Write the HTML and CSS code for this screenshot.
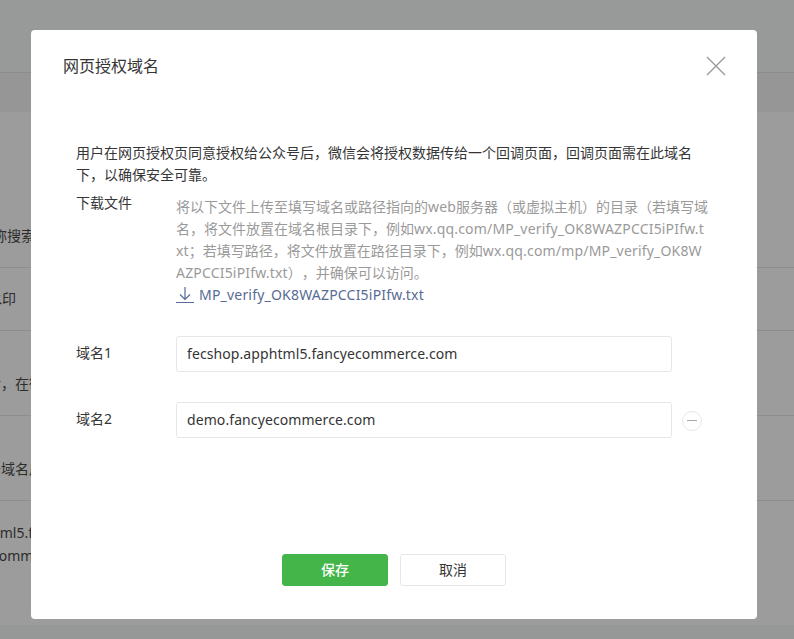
FILE: index.html
```html
<!DOCTYPE html>
<html lang="zh-CN">
<head>
<meta charset="utf-8">
<title>网页授权域名</title>
<link rel="stylesheet" href="styles.css">
</head>
<body>
<div class="page">
  <div class="top"></div>
  <div class="band"></div>
  <div class="rows">
    <div class="row row-a"><span class="bg-text shift-a">名称搜索</span></div>
    <div class="row row-b"><span class="bg-text shift-b">水印</span></div>
    <div class="row row-c"><span class="bg-text shift-c">后，在微</span></div>
    <div class="row row-d"><span class="bg-text shift-d">务域名后</span></div>
    <div class="row row-e"><span class="bg-text shift-e">html5.fancy<span class="line-two">commerce</span></span></div>
  </div>
  <div class="bottom"></div>
</div>

<div class="dialog">
  <div class="head">
    <h2 class="title">网页授权域名</h2>
    <svg class="close" width="20" height="20" viewBox="0 0 20 20"><path d="M1 1L19 19M19 1L1 19" fill="none" stroke="#9a9a9a" stroke-width="1.4"/></svg>
  </div>
  <div class="body">
    <p class="intro">用户在网页授权页同意授权给公众号后，微信会将授权数据传给一个回调页面，回调页面需在此域名下，以确保安全可靠。</p>
    <div class="field field-file">
      <div class="label">下载文件</div>
      <div class="content">
        <p class="desc">将以下文件上传至填写域名或路径指向的<span class="la">web</span>服务器（或虚拟主机）的目录（若填写域名，将文件放置在域名根目录下，例如<span class="la">wx.qq.com/MP_verify_OK8WAZPCCI5iPIfw.txt</span>；若填写路径，将文件放置在路径目录下，例如<span class="la">wx.qq.com/mp/MP_verify_OK8WAZPCCI5iPIfw.txt</span>），并确保可以访问。</p>
        <a class="file" href="#">
          <svg class="dl" width="18" height="18" viewBox="0 0 18 18"><path d="M9 1V13.5M4 8.5L9 13.5L14 8.5M0 16.5H18" fill="none" stroke="#576b95" stroke-width="1.2"/></svg>
          <span class="la-file">MP_verify_OK8WAZPCCI5iPIfw.txt</span>
        </a>
      </div>
    </div>
    <div class="field field-input">
      <div class="label">域名1</div>
      <div class="box">fecshop.apphtml5.fancyecommerce.com</div>
    </div>
    <div class="field field-input">
      <div class="label">域名2</div>
      <div class="box">demo.fancyecommerce.com</div>
      <span class="minus"></span>
    </div>
  </div>
  <div class="actions">
    <button class="btn primary" type="button">保存</button>
    <button class="btn" type="button">取消</button>
  </div>
</div>
</body>
</html>
```
FILE: styles.css
```css
* { box-sizing: border-box; }
html, body { margin: 0; padding: 0; height: 100%; overflow: hidden; }
body {
  font-family: "Noto Sans", "Noto Sans CJK SC", sans-serif;
  font-size: 14px;
  color: #353535;
  background: #979998;
  text-spacing-trim: space-all;
}
.page { display: flex; flex-direction: column; height: 639px; }
.top { height: 73px; background: #989a99; border-bottom: 1px solid #8c8c8c; }
.band { height: 39px; background: #959695; }
.rows { height: 513px; background: #9c9c9c; }
.row { border-bottom: 1px solid #8d8d8d; display: flex; align-items: flex-end; overflow: hidden; line-height: 23px; color: #2c2c2c; }
.row-a { height: 156px; padding-bottom: 20px; }
.row-b { height: 63px; padding-bottom: 20px; }
.row-c { height: 85px; padding-bottom: 20px; }
.row-d { height: 85px; padding-bottom: 20px; }
.row-e { height: 124px; border-bottom: 0; padding-bottom: 58px; }
.bg-text { white-space: nowrap; }
.shift-a { margin-left: -21px; }
.shift-b { margin-left: -12px; }
.shift-c { margin-left: -13px; }
.shift-d { margin-left: -13px; }
.shift-e { margin-left: -14px; }
.line-two { display: block; padding-left: 6px; }
.bottom { flex: 1; background: #969897; }

.dialog {
  position: absolute;
  left: 31px;
  top: 30px;
  width: 726px;
  height: 589px;
  background: #fff;
  border-radius: 4px;
  display: flex;
  flex-direction: column;
}
.head { display: flex; justify-content: space-between; align-items: center; padding: 12px 31px 0 32px; height: 60px; }
.title { margin: 0; font-size: 16px; font-weight: 400; line-height: 24px; }
.close { display: block; }
.body { flex: 1; padding: 52px 45px 0; }
.intro { margin: 0; line-height: 22px; width: 620px; }
.field { display: flex; }
.field-file { margin-top: 6px; }
.label { width: 100px; flex: none; line-height: 22px; }
.content { width: 534px; color: #9a9a9a; padding-top: 4px; }
.desc { margin: 0; line-height: 22px; word-break: break-all; }
.la { letter-spacing: .18px; }
.file { display: flex; align-items: center; gap: 5px; line-height: 22px; color: #576b95; text-decoration: none; }
.la-file { letter-spacing: .2px; }
.dl { display: block; }
.field-input { align-items: center; height: 36px; margin-bottom: 30px; }
.field-input .label { margin-bottom: 2px; }
.field-file + .field-input { margin-top: 30px; }
.box { width: 496px; height: 36px; border: 1px solid #e7e7eb; border-radius: 3px; padding: 0 10px; line-height: 34px; color: #353535; letter-spacing: .09px; }
.minus { width: 20px; height: 20px; margin: 1px 0 0 10px; border: 1px solid #e7e7eb; border-radius: 50%; display: flex; align-items: center; justify-content: center; }
.minus::before { content: ""; width: 10px; height: 1px; background: #a8a8a8; }
.actions { display: flex; justify-content: center; gap: 12px; padding-bottom: 33px; }
.btn { width: 106px; height: 32px; border: 1px solid #e7e7eb; border-radius: 3px; background: #fff; color: #353535; font: inherit; font-size: 14px; padding: 0 0 2px; }
.primary { background: #44b549; border-color: #44b549; color: #fff; font-weight: 500; }
```
